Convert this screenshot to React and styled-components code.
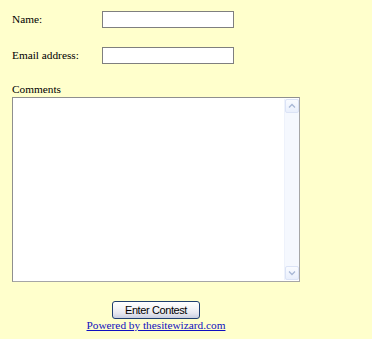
import React from "react";
import styled, { createGlobalStyle } from "styled-components";

const Global = createGlobalStyle`
  html, body { margin: 0; padding: 0; }
  body {
    background: #ffffcc;
    font-family: "Liberation Serif", "Times New Roman", serif;
    font-size: 11.3px;
    color: #000;
  }
`;

const Form = styled.form`
  width: 288px;
  padding: 11px 0 0 12px;
  display: flex;
  flex-direction: column;
`;

const Row = styled.div`
  display: grid;
  grid-template-columns: 90px 132px;
  align-items: center;
  height: 17px;
  margin-bottom: ${(p) => p.$gap || 0}px;
`;

const Label = styled.label`
  line-height: 13px;
  white-space: nowrap;
`;

const TextInput = styled.input`
  box-sizing: border-box;
  width: 132px;
  height: 17px;
  margin: 0;
  padding: 1px 2px;
  border: 1px solid #7f7f7f;
  background: #fff;
  font: inherit;
  outline: none;
`;

const BlockLabel = styled.label`
  display: block;
  margin-top: 19px;
  line-height: 13px;
  padding-bottom: 1px;
`;

const AreaBox = styled.div`
  box-sizing: border-box;
  width: 288px;
  height: 185px;
  border: 1px solid #8f8f8f;
  border-right-color: #a6a6a6;
  border-bottom-color: #a6a6a6;
  background: #fff;
  display: flex;
`;

const Area = styled.textarea`
  flex: 1;
  border: 0;
  margin: 0;
  padding: 2px;
  resize: none;
  outline: none;
  overflow: hidden;
  font: inherit;
  background: transparent;
`;

const Scroll = styled.div`
  width: 14px;
  margin: 1px 0;
  background: #f5f8fe;
  border-left: 1px solid #eef2fb;
  display: flex;
  flex-direction: column;
  justify-content: space-between;
`;

const ScrollBtn = styled.div`
  box-sizing: border-box;
  height: 14px;
  display: flex;
  align-items: center;
  justify-content: center;
  background: linear-gradient(to bottom, #f9fbff, #e9effc);
  border: 1px solid #dbe3f6;
  border-radius: 2px;
`;

const Footer = styled.div`
  margin-top: 19px;
  display: flex;
  flex-direction: column;
  align-items: center;
`;

const Button = styled.button`
  box-sizing: border-box;
  width: 88px;
  height: 18px;
  margin: 0;
  padding: 0;
  border: 1px solid #1f3f6f;
  border-radius: 3px;
  background: linear-gradient(
    to bottom,
    #ffffff 0%,
    #f6f6f8 35%,
    #e6e7ef 70%,
    #c9cfe2 100%
  );
  font-family: "Liberation Sans", Arial, sans-serif;
  font-size: 11px;
  letter-spacing: -0.4px;
  color: #000;
  line-height: 14px;
`;

const Link = styled.a`
  display: block;
  line-height: 13px;
  color: #1010c0;
  text-decoration: underline;
`;

const Chevron = ({ up }) => (
  <svg width="8" height="6" viewBox="0 0 8 6">
    <path
      d={up ? "M1 4.5 L4 1.5 L7 4.5" : "M1 1.5 L4 4.5 L7 1.5"}
      fill="none"
      stroke="#a9b8d6"
      strokeWidth="1.3"
    />
  </svg>
);

export default function App() {
  return (
    <>
      <Global />
      <Form onSubmit={(e) => e.preventDefault()}>
        <Row $gap={19}>
          <Label>Name:</Label>
          <TextInput type="text" />
        </Row>
        <Row>
          <Label>Email address:</Label>
          <TextInput type="text" />
        </Row>
        <BlockLabel>Comments</BlockLabel>
        <AreaBox>
          <Area />
          <Scroll>
            <ScrollBtn>
              <Chevron up />
            </ScrollBtn>
            <ScrollBtn>
              <Chevron />
            </ScrollBtn>
          </Scroll>
        </AreaBox>
        <Footer>
          <Button type="submit">Enter Contest</Button>
          <Link href="#">Powered by thesitewizard.com</Link>
        </Footer>
      </Form>
    </>
  );
}
